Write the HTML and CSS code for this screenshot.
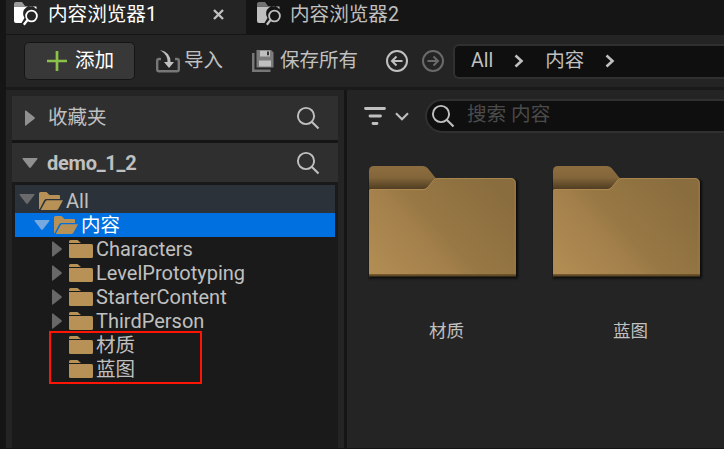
FILE: index.html
```html
<!DOCTYPE html>
<html lang="zh-CN">
<head>
<meta charset="utf-8">
<title>内容浏览器</title>
<link rel="stylesheet" href="styles.css">
</head>
<body>
<svg class="defs" width="0" height="0" aria-hidden="true">
  <defs>
    <linearGradient id="front" gradientUnits="userSpaceOnUse" x1="4" y1="107" x2="116" y2="8">
      <stop offset="0" stop-color="#b28d53"/>
      <stop offset=".4" stop-color="#a37f4b"/>
      <stop offset=".52" stop-color="#987945"/>
      <stop offset="1" stop-color="#8a6d3e"/>
    </linearGradient>
    <linearGradient id="back" gradientUnits="userSpaceOnUse" x1="0" y1="1" x2="0" y2="24">
      <stop offset="0" stop-color="#8c6d3f"/>
      <stop offset=".5" stop-color="#83663a"/>
      <stop offset="1" stop-color="#503d22"/>
    </linearGradient>
    <symbol id="browser" viewBox="0 0 25 25">
      <path d="M0 4V2Q0 0 2 0H8L11 4Z" opacity=".55"/>
      <path d="M0 4.500H22.500V7.200A7 7 0 0 0 10.500 16L7.500 21H2Q0 21 0 19Z"/>
      <circle cx="17.500" cy="14" r="5.400" fill="none" stroke="currentColor" stroke-width="1.800"/>
      <path d="M13.500 18L9.800 22.800" stroke="currentColor" stroke-width="2.300"/>
    </symbol>
    <symbol id="search" viewBox="0 0 24 24">
      <circle cx="10" cy="10" r="8.100" fill="none" stroke="currentColor" stroke-width="1.900"/>
      <path d="M15.700 15.700L22.500 22.500" stroke="currentColor" stroke-width="2.100"/>
    </symbol>
    <symbol id="open" viewBox="0 0 24 18">
      <path d="M0 17V1.500Q0 0 1.500 0H7.500L10.500 3H20Q21 3 21 4.200V7H7.500Q6 7 5.200 8.300L.7 17Z"/>
      <path d="M1.700 18L6.700 9.100Q7.200 8.300 8.200 8.300H24L19.500 16.500Q18.700 18 17 18Z"/>
    </symbol>
    <symbol id="closed" viewBox="0 0 24 18">
      <path d="M0 3V1.500Q0 0 1.500 0H8.500L12 3Z"/>
      <path d="M0 4H22.500Q24 4 24 5.500V16.500Q24 18 22.500 18H1.500Q0 18 0 16.500Z"/>
    </symbol>
    <symbol id="right" viewBox="0 0 10 16"><path d="M0 1Q0 0 1 .6L9.500 7.200Q10.300 8 9.500 8.800L1 15.400Q0 16 0 15Z"/></symbol>
    <symbol id="down" viewBox="0 0 16 10"><path d="M1 0Q0 0 .6 1L7.200 9.500Q8 10.300 8.800 9.500L15.400 1Q16 0 15 0Z"/></symbol>
    <symbol id="chevron" viewBox="0 0 10 14"><path d="M1.500 1.500L7.500 7L1.500 12.500" fill="none" stroke="currentColor" stroke-width="2.600"/></symbol>
    <symbol id="folder" viewBox="0 0 152 118">
      <path class="folder-shadow" d="M1 15H148Q150 15 150 20V113.500H1Z"/>
      <path d="M1 30V6Q1 1 6 1H55Q58 1 60 3.500L68 13.500L60 30Z" fill="url(#back)"/>
      <path d="M1 110V26Q1 24 3 24H56Q58 24 60 22L66 14.800Q67 13.500 69 13.500H143Q147.500 13.500 147.500 18V110Z" fill="url(#front)"/>
      <path d="M1.500 26Q1.500 24.500 3 24.500H56Q58 24.500 60 22L66 14.800Q67 13.500 69 13.500H143Q147.300 13.500 147.300 18V110" fill="none" stroke="#b08a51" stroke-width=".9"/>
      <path d="M1 109.200H148V111.500H1Z" fill="#604a26"/>
    </symbol>
  </defs>
</svg>
<div class="window">
  <nav class="tabs">
    <div class="tab active">
      <svg class="tab-icon"><use href="#browser"/></svg>
      <span class="tab-name">内容浏览器1</span>
      <svg class="close" viewBox="0 0 11 11"><path d="M1 1L10 10M10 1L1 10" stroke="currentColor" stroke-width="2.400"/></svg>
    </div>
    <div class="tab">
      <svg class="tab-icon"><use href="#browser"/></svg>
      <span class="tab-name">内容浏览器2</span>
    </div>
  </nav>
  <header class="toolbar">
    <button class="add">
      <svg class="plus" viewBox="0 0 20 20"><path d="M10 0V20M0 10H20" stroke="#8bc24a" stroke-width="2.700"/></svg>
      <span>添加</span>
    </button>
    <div class="tool import">
      <svg class="import-icon" viewBox="0 0 24 23">
        <path d="M5 9H3Q1.200 9 1.200 11V19.500Q1.200 21.300 3 21.300H21Q22.800 21.300 22.800 19.500V11Q22.800 9 21 9H19" fill="none" stroke="#777" stroke-width="2.400"/>
        <path d="M4 0Q14.500 2 14.500 12H18L13 18L8 12H11.500Q12 5 4 0Z"/>
      </svg>
      <span>导入</span>
    </div>
    <div class="tool save">
      <svg class="save-icon" viewBox="0 0 22 22">
        <path d="M0 3H2.500V19.500H18.500V22H0Z" fill="#777"/>
        <path d="M4.500 0H19L21.500 2.500V17.500H4.500Z" fill="#7c7c7c"/>
        <path d="M8 .7H18V6.500H8ZM7 10.500H19V16.500H7Z"/>
        <path d="M15 1.500H17V5.300H15Z" fill="#333"/>
      </svg>
      <span>保存所有</span>
    </div>
    <svg class="nav" viewBox="0 0 22 22"><circle cx="11" cy="11" r="10" fill="none" stroke="currentColor" stroke-width="2"/><path d="M16.500 11H6M10.500 6.500L6 11L10.500 15.500" fill="none" stroke="currentColor" stroke-width="2"/></svg>
    <svg class="nav disabled" viewBox="0 0 22 22"><circle cx="11" cy="11" r="10" fill="none" stroke="currentColor" stroke-width="2"/><path d="M5.500 11H16M11.500 6.500L16 11L11.500 15.500" fill="none" stroke="currentColor" stroke-width="2"/></svg>
    <div class="path">
      <span class="path-all">All</span>
      <svg class="chevron"><use href="#chevron"/></svg>
      <span class="path-content">内容</span>
      <svg class="chevron"><use href="#chevron"/></svg>
    </div>
  </header>
  <main class="main">
    <aside class="side">
      <section class="section favorites">
        <svg class="arrow-right"><use href="#right"/></svg>
        <span class="section-name">收藏夹</span>
        <svg class="search"><use href="#search"/></svg>
      </section>
      <section class="section project">
        <svg class="arrow-down"><use href="#down"/></svg>
        <b class="section-name">demo_1_2</b>
        <svg class="search"><use href="#search"/></svg>
      </section>
      <div class="tree">
        <div class="row root"><svg class="arrow-down"><use href="#down"/></svg><svg class="icon"><use href="#open"/></svg><span>All</span></div>
        <div class="row selected"><svg class="arrow-down"><use href="#down"/></svg><svg class="icon"><use href="#open"/></svg><span class="cjk">内容</span></div>
        <div class="row child"><svg class="arrow-right"><use href="#right"/></svg><svg class="icon"><use href="#closed"/></svg><span>Characters</span></div>
        <div class="row child"><svg class="arrow-right"><use href="#right"/></svg><svg class="icon"><use href="#closed"/></svg><span>LevelPrototyping</span></div>
        <div class="row child"><svg class="arrow-right"><use href="#right"/></svg><svg class="icon"><use href="#closed"/></svg><span>StarterContent</span></div>
        <div class="row child"><svg class="arrow-right"><use href="#right"/></svg><svg class="icon"><use href="#closed"/></svg><span>ThirdPerson</span></div>
        <div class="marked">
          <div class="row leaf"><svg class="icon"><use href="#closed"/></svg><span class="cjk">材质</span></div>
          <div class="row leaf"><svg class="icon"><use href="#closed"/></svg><span class="cjk">蓝图</span></div>
        </div>
      </div>
    </aside>
    <section class="assets">
      <div class="filterbar">
        <svg class="filter" viewBox="0 0 22 18"><path d="M1.500 1.500H20.500M6 9H16.500M9 16.500H13" stroke="currentColor" stroke-width="2.800" stroke-linecap="round"/></svg>
        <svg class="filter-arrow" viewBox="0 0 14 9"><path d="M1 1.300L7 7.300L13 1.300" fill="none" stroke="currentColor" stroke-width="2.100"/></svg>
        <div class="searchbox"><svg class="search"><use href="#search"/></svg><span>搜索 内容</span></div>
      </div>
      <div class="grid">
        <div class="asset"><svg class="folder"><use href="#folder"/></svg><span>材质</span></div>
        <div class="asset"><svg class="folder"><use href="#folder"/></svg><span>蓝图</span></div>
      </div>
    </section>
  </main>
</div>
</body>
</html>
```
FILE: styles.css
```css
* { box-sizing: border-box; }
body { margin: 0; background: #151515; color: #c0c0c0; font: 20px/24px Roboto, "Noto Sans CJK SC", sans-serif; overflow: hidden; }
svg { display: block; flex: none; fill: currentColor; }
span, b { white-space: nowrap; }
.defs { position: absolute; }
.window { width: 724px; height: 449px; padding: 0 0 1px 6px; display: flex; flex-direction: column; }
.tabs { height: 35px; display: flex; flex: none; }
.tab { width: 240px; height: 34px; padding: 2px 22px 0 8px; display: flex; align-items: flex-start; }
.tab + .tab { padding-left: 11px; }
.tab.active { background: #242424; color: #fff; }
.tab-icon { width: 25px; height: 25px; }
.tab-name { margin: 1px 0 0 9px; font-size: 19.600px; }
.tab + .tab .tab-name { margin-left: 8px; }
.close { width: 11px; height: 11px; margin: 7px 0 0 auto; color: #c0c0c0; }
.toolbar { height: 52px; flex: none; background: #242424; display: flex; align-items: center; }
.add { width: 111px; height: 38px; margin-left: 18px; padding: 0 0 0 22px; border: 1px solid #151515; border-radius: 5px; background: #383838; color: #fff; font: inherit; font-size: 19.600px; display: flex; align-items: center; gap: 8px; }
.plus { width: 20px; height: 20px; }
.tool { display: flex; align-items: center; font-size: 19.500px; }
.import { margin-left: 21px; gap: 4px; }
.import-icon { width: 24px; height: 23px; }
.save { margin-left: 29px; gap: 6px; }
.save-icon { width: 22px; height: 22px; }
.nav { width: 22px; height: 22px; margin-left: 28px; }
.nav.disabled { margin-left: 14px; color: #6a6a6a; }
.path { flex: 1; height: 35px; margin-left: 9px; padding-left: 16px; border: 2px solid #303030; border-right: 0; border-radius: 6px 0 0 6px; background: #0f0f0f; display: flex; align-items: center; font-size: 19.500px; }
.chevron { width: 10px; height: 14px; margin-left: 21px; }
.path-content { margin-left: 21px; }
.main { flex: 1; min-height: 0; border-top: 3px solid #1a1a1a; display: flex; }
.side { width: 341px; padding-top: 6px; border-left: 6px solid #242424; border-right: 3px solid #151515; background: linear-gradient(90deg, #1a1a1a 326px, #242424 326px); box-shadow: inset 0 6px #242424; flex: none; }
.section { width: 326px; padding: 0 18px 0 13px; background: #2f2f2f; display: flex; align-items: center; }
.favorites { height: 47px; padding-bottom: 1px; border-bottom: 3px solid #151515; font-size: 19.500px; }
.project { height: 39px; padding-left: 10px; }
.section .arrow-right { color: #909090; }
.section .arrow-down { color: #909090; }
.arrow-right { width: 10px; height: 16px; }
.arrow-down { width: 16px; height: 10px; }
.section-name { margin-left: 13px; }
.project .section-name { margin-left: 9px; letter-spacing: -.25px; }
.section .search { margin-left: auto; }
.search { width: 24px; height: 24px; }
.tree { width: 320px; margin: 3px 0 0 3px; }
.row { height: 24px; display: flex; align-items: center; }
.row .icon { width: 24px; height: 18px; color: #b89156; }
.row span { margin-left: 3px; }
.row .cjk { font-size: 19.500px; padding-top: 2px; }
.root { height: 28px; padding: 3px 0 0 4px; background: #2b323a; }
.root .arrow-down { color: #6a6a6c; margin-bottom: 3px; }
.row .arrow-down { margin-right: 4px; }
.selected { padding-left: 19px; background: #0070e0; color: #fff; }
.selected .arrow-down { color: #76a9df; }
.child { padding-left: 37px; }
.child .arrow-right { color: #686868; margin-right: 7px; }
.marked { width: 153px; height: 53px; margin: -2px 0 0 34px; padding-left: 18px; border: 2px solid #ff1505; }
.assets { flex: 1; min-width: 0; background: #242424; padding-top: 9px; }
.filterbar { display: flex; align-items: center; padding-left: 17px; }
.filter { width: 22px; height: 18px; }
.filter-arrow { width: 14px; height: 9px; margin-left: 9px; }
.searchbox { flex: 1; height: 34px; margin-left: 16px; padding: 0 0 1px 4px; border: 2px solid #303030; border-right: 0; border-radius: 17px 0 0 17px; background: #0f0f0f; display: flex; align-items: center; color: #4b4b4b; font-size: 19.600px; }
.searchbox .search { color: #c0c0c0; }
.searchbox span { margin: -1px 0 0 12px; }
.grid { padding: 32px 0 0 21px; display: flex; gap: 32px; }
.asset { width: 152px; display: flex; flex-direction: column; align-items: center; font-size: 17.500px; }
.folder { width: 152px; height: 118px; overflow: visible; }
.folder-shadow { fill: #0c0c0c; filter: blur(1px); }
.asset span { margin: 36px 0 0 5px; }
```
